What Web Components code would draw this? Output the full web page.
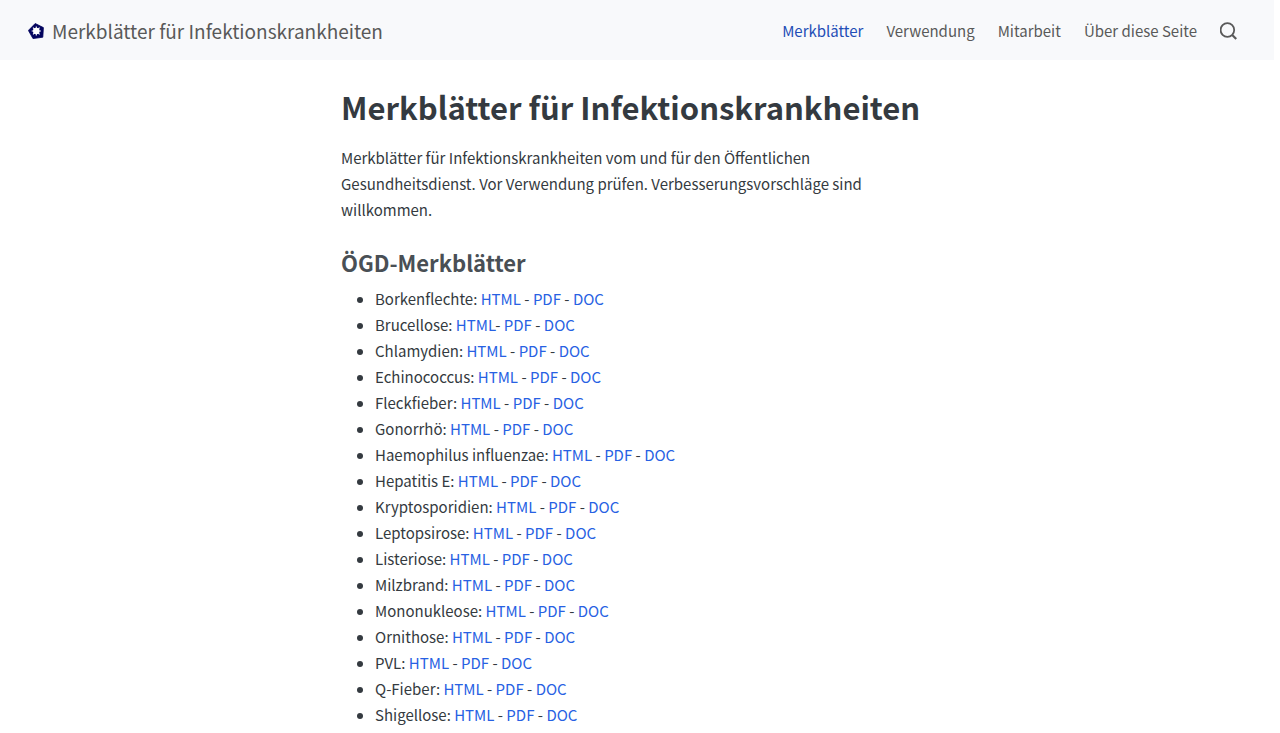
<!DOCTYPE html>
<html lang="de">
<head>
<meta charset="utf-8">
<meta name="viewport" content="width=device-width, initial-scale=1">
<title>Merkblätter für Infektionskrankheiten</title>
<style>
  body { margin: 0; background: #fff; color: #343a40; font: 15px/26px "Noto Sans CJK SC", "Open Sans", sans-serif; }
</style>
</head>
<body>
<page-shell>
  <site-header slot="header">
    <site-brand slot="brand">Merkblätter für Infektionskrankheiten</site-brand>
    <nav-link href="#merkblaetter" current>Merkblätter</nav-link>
    <nav-link href="#verwendung">Verwendung</nav-link>
    <nav-link href="#mitarbeit">Mitarbeit</nav-link>
    <nav-link href="#ueber">Über diese Seite</nav-link>
    <search-button></search-button>
  </site-header>
  <page-intro heading="Merkblätter für Infektionskrankheiten">Merkblätter für Infektionskrankheiten vom und für den Öffentlichen Gesundheitsdienst. Vor Verwendung prüfen. Verbesserungsvorschläge sind willkommen.</page-intro>
  <leaflet-list heading="ÖGD-Merkblätter"></leaflet-list>
</page-shell>
<script>
  class BaseElement extends HTMLElement {
    connectedCallback() {
      if (!this.shadowRoot) this.attachShadow({ mode: "open" }).innerHTML = this.render();
    }
  }

  customElements.define("page-shell", class extends BaseElement {
    render() {
      return `<style>
        :host { display: flex; flex-direction: column; height: 100vh; }
        header { flex: none; margin-right: 6px; background: #f8f9fb; }
        .scroll { flex: 1; min-height: 0; overflow-y: auto; scrollbar-width: none; padding: 23px 22px 0 16px; }
        main { max-width: 592px; margin: 0 auto; }
      </style>
      <header><slot name="header"></slot></header>
      <div class="scroll"><main><slot></slot></main></div>`;
    }
  });

  customElements.define("site-header", class extends BaseElement {
    render() {
      return `<style>
        :host { display: flex; align-items: center; justify-content: space-between; height: 60px; padding: 2px 36px 0 28px; box-sizing: border-box; color: #595959; }
        nav { display: flex; align-items: center; gap: 23px; }
      </style>
      <slot name="brand"></slot>
      <nav aria-label="Hauptnavigation"><slot></slot></nav>`;
    }
  });

  customElements.define("site-brand", class extends BaseElement {
    render() {
      return `<style>
        :host { display: block; }
        a { display: flex; align-items: center; gap: 8px; color: inherit; text-decoration: none; font-size: 19px; line-height: 28px; white-space: nowrap; }
        svg { width: 16px; height: 16px; }
      </style>
      <a href="#"><svg viewBox="0 0 16 16" aria-hidden="true">
        <path d="M7.2 .5 15.4 4.6 14.8 14.2 5 15.6 .4 7.4Z" fill="#03045e" stroke="#03045e" stroke-width=".8" stroke-linejoin="round"/>
        <circle cx="8.3" cy="8" r="3.3" fill="#fff"/>
        <path d="M8.3 3.4v9.2M3.7 8h9.2M5 4.7l6.6 6.6M11.6 4.7l-6.6 6.6" stroke="#fff" stroke-width="1.1"/>
      </svg><span><slot></slot></span></a>`;
    }
  });

  customElements.define("nav-link", class extends BaseElement {
    render() {
      const current = this.hasAttribute("current") ? ' aria-current="page"' : "";
      return `<style>
        :host { display: block; }
        a { color: inherit; text-decoration: none; font-size: 15px; line-height: 26px; white-space: nowrap; }
        a[aria-current] { color: #1f4eb6; }
      </style>
      <a href="${this.getAttribute("href")}"${current}><slot></slot></a>`;
    }
  });

  customElements.define("search-button", class extends BaseElement {
    render() {
      return `<style>
        :host { display: block; }
        button { display: block; padding: 0; border: 0; background: none; color: inherit; cursor: pointer; }
        svg { display: block; width: 18px; height: 18px; }
      </style>
      <button type="button" aria-label="Suchen"><svg viewBox="0 0 18 18" fill="none" stroke="currentColor" stroke-width="1.8">
        <circle cx="7.4" cy="8" r="6.8"/><path d="m12.2 13 4 4" stroke-width="2.2"/>
      </svg></button>`;
    }
  });

  customElements.define("page-intro", class extends BaseElement {
    render() {
      return `<style>
        :host { display: block; }
        h1 { margin: 0; font-size: 31px; line-height: 48px; font-weight: 700; }
        p { margin: 14px 0 0; }
      </style>
      <h1>${this.getAttribute("heading")}</h1>
      <p><slot></slot></p>`;
    }
  });

  customElements.define("leaflet-item", class extends BaseElement {
    render() {
      const gap = this.hasAttribute("tight") ? "" : " ";
      return `<style>
        :host { display: inline; }
        a { color: #2761e3; text-decoration: none; }
      </style>${this.getAttribute("name")}: <a href="#html">HTML</a>${gap}- <a href="#pdf">PDF</a> - <a href="#doc">DOC</a>`;
    }
  });

  customElements.define("leaflet-list", class extends BaseElement {
    render() {
      const names = ["Borkenflechte", "Brucellose", "Chlamydien", "Echinococcus", "Fleckfieber", "Gonorrhö",
        "Haemophilus influenzae", "Hepatitis E", "Kryptosporidien", "Leptopsirose", "Listeriose", "Milzbrand",
        "Mononukleose", "Ornithose", "PVL", "Q-Fieber", "Shigellose", "Tollwut"];
      return `<style>
        :host { display: block; margin-top: 21px; }
        h2 { margin: 0; font-size: 22px; line-height: 36px; font-weight: 700; color: #494f55; }
        ul { margin: 6px 0 0; padding: 0 0 0 34px; }
      </style>
      <h2>${this.getAttribute("heading")}</h2>
      <ul>${names.map(n => `<li><leaflet-item name="${n}"${n === "Brucellose" ? " tight" : ""}></leaflet-item></li>`).join("")}</ul>`;
    }
  });
</script>
</body>
</html>
